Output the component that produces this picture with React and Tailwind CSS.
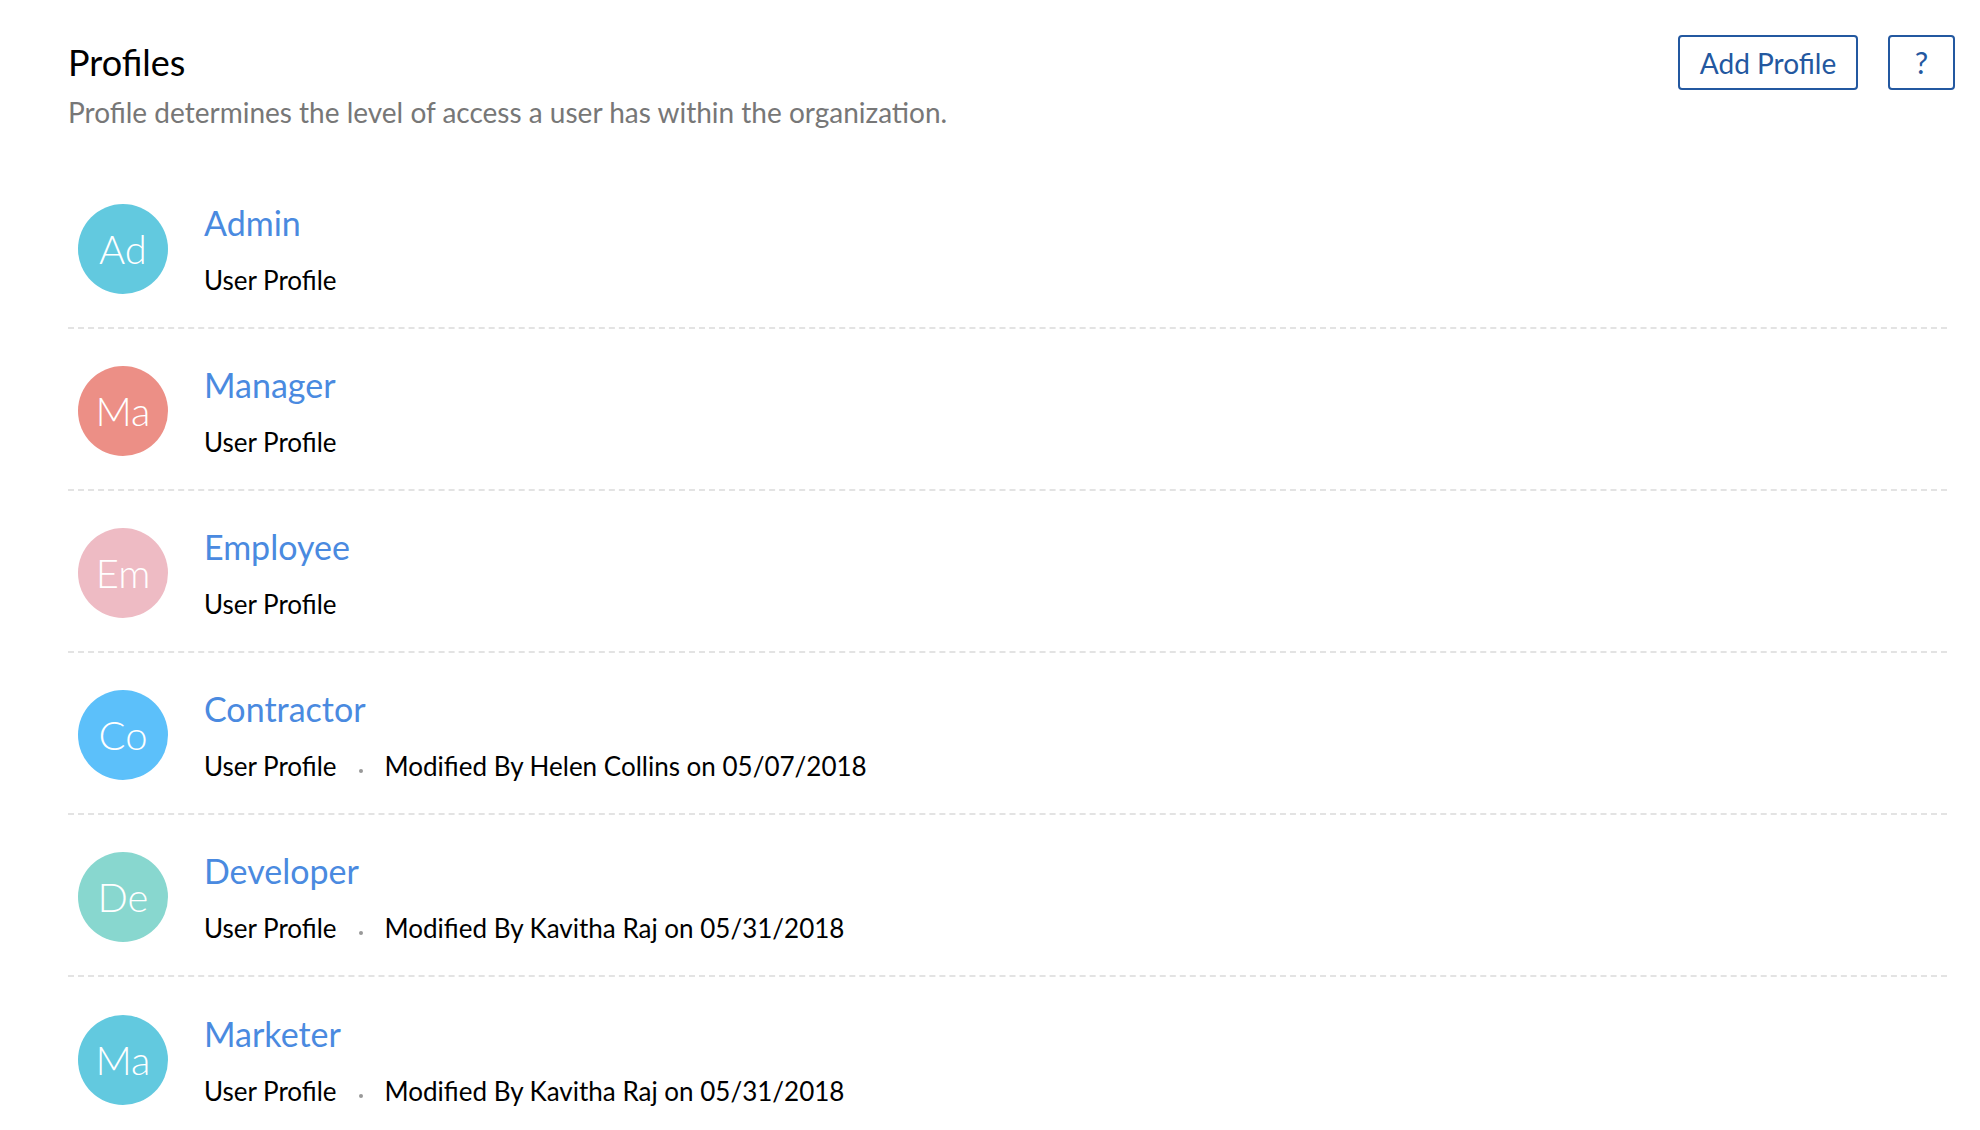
import React from 'react';

const profiles = [
  { name: 'Admin', initials: 'Ad', color: 'bg-[#62c9df]' },
  { name: 'Manager', initials: 'Ma', color: 'bg-[#ec8f86]' },
  { name: 'Employee', initials: 'Em', color: 'bg-[#eebbc4]' },
  { name: 'Contractor', initials: 'Co', color: 'bg-[#5cc0fa]', modified: 'Modified By Helen Collins on 05/07/2018' },
  { name: 'Developer', initials: 'De', color: 'bg-[#88d7cf]', modified: 'Modified By Kavitha Raj on 05/31/2018' },
  { name: 'Marketer', initials: 'Ma', color: 'bg-[#62c9df]', modified: 'Modified By Kavitha Raj on 05/31/2018' },
];

const ProfileRow = ({ profile, last }) => {
  return (
    <div
      className={`flex items-center h-[162px] pt-[4px] ${
        last ? '' : 'border-b-2 border-dashed border-[#e3e3e3]'
      }`}
    >
      <div
        className={`w-[90px] h-[90px] ml-[10px] rounded-full flex items-center justify-center text-white text-[40px] font-light ${profile.color}`}
      >
        {profile.initials}
      </div>
      <div className="ml-[36px] flex flex-col">
        <span className="text-[34px] leading-[40px] text-[#4a8ae0]">{profile.name}</span>
        <div className="flex items-end mt-[21px] text-[26px] leading-[32px] text-black">
          <span>User Profile</span>
          {profile.modified && (
            <>
              <span className="w-[4px] h-[4px] rounded-full bg-[#999] mx-[22px] mb-[9px]"></span>
              <span>{profile.modified}</span>
            </>
          )}
        </div>
      </div>
    </div>
  );
};

const App = () => {
  return (
    <main className="min-h-screen bg-white font-['Lato','Open_Sans',sans-serif] pl-[68px] pr-[25px]">
      <header className="flex justify-between pt-[35px]">
        <div className="flex flex-col">
          <h1 className="text-[36px] leading-[44px] text-black mt-[5px]">Profiles</h1>
          <p className="text-[28px] leading-[34px] text-[#777] mt-[11px]">
            Profile determines the level of access a user has within the organization.
          </p>
        </div>
        <div className="flex gap-[30px]">
          <button className="h-[55px] w-[180px] border-2 border-[#2358a0] rounded-[4px] text-[#2358a0] text-[28px]">
            Add Profile
          </button>
          <button className="h-[55px] w-[67px] border-2 border-[#2358a0] rounded-[4px] text-[#2358a0] text-[30px]">
            ?
          </button>
        </div>
      </header>
      <section className="mt-[38px] mr-[8px]">
        {profiles.map((p, i) => (
          <ProfileRow key={i} profile={p} last={i === profiles.length - 1} />
        ))}
      </section>
    </main>
  );
};

export default App;
